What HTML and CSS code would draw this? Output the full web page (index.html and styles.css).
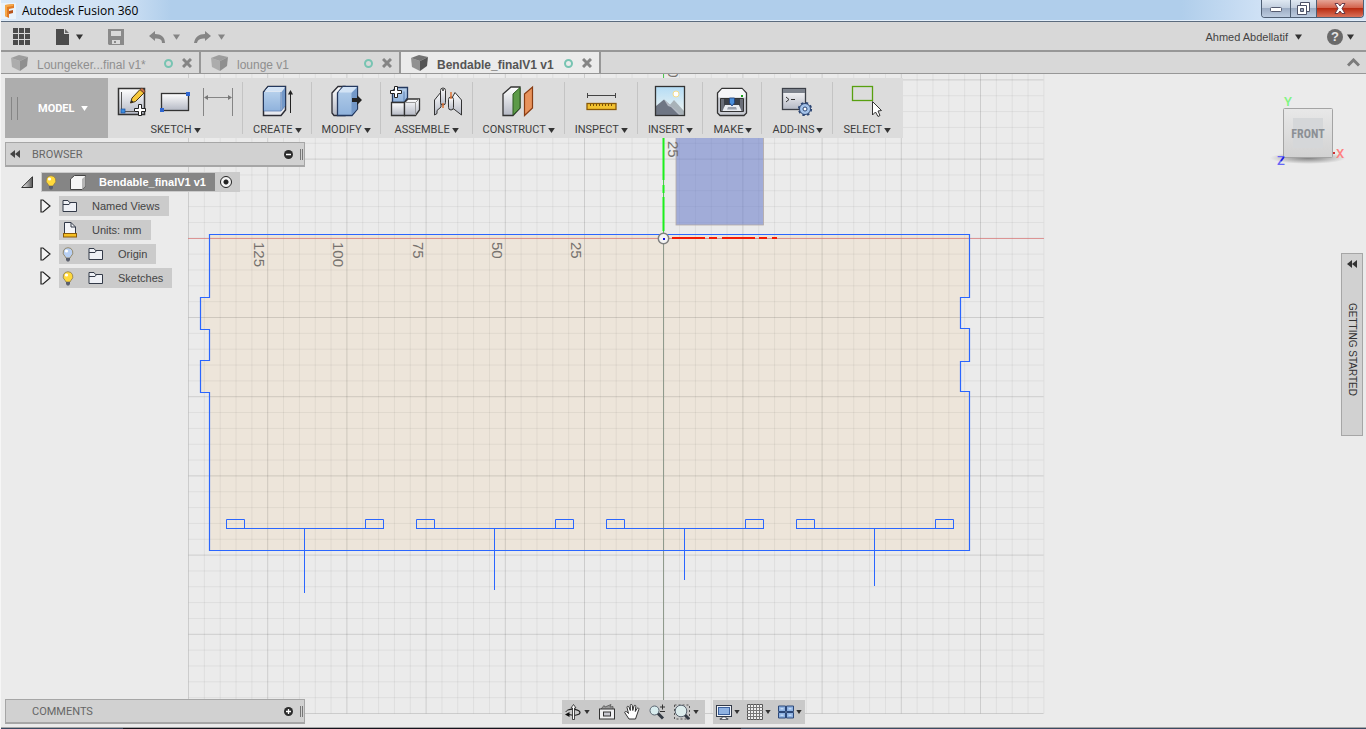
FILE: index.html
```html
<!DOCTYPE html>
<html lang="en">
<head>
    <meta charset="UTF-8">
    <meta name="viewport" content="width=device-width, initial-scale=1.0">
    <title>Autodesk Fusion 360</title>
    <link rel="stylesheet" href="styles.css">
</head>
<body>
    <!-- shared gradients and symbols -->
    <svg class="defs" width="0" height="0" aria-hidden="true">
        <defs>
            <linearGradient id="gBlue" x1="0" y1="0" x2="0" y2="1"><stop offset="0" stop-color="#b5cfeb"/><stop offset="1" stop-color="#8fb2dc"/></linearGradient>
            <linearGradient id="gGray" x1="0" y1="0" x2="0" y2="1"><stop offset="0" stop-color="#ffffff"/><stop offset="1" stop-color="#b4b8c4"/></linearGradient>
            <linearGradient id="gSky" x1="0" y1="0" x2="0" y2="1"><stop offset="0" stop-color="#b4dcf5"/><stop offset="1" stop-color="#f2f6f2"/></linearGradient>
            <linearGradient id="gFace" x1="0" y1="0" x2="0" y2="1"><stop offset="0" stop-color="#e8e8e8"/><stop offset="1" stop-color="#d2d2d2"/></linearGradient>
            <radialGradient id="gShadow"><stop offset="0" stop-color="#808080"/><stop offset="1" stop-color="#808080" stop-opacity="0"/></radialGradient>
            <linearGradient id="gTri" x1="0" y1="0" x2="1" y2="0"><stop offset="0" stop-color="#ffffff"/><stop offset="1" stop-color="#555555"/></linearGradient>
        </defs>
        <symbol id="caret" viewBox="0 0 8 6"><path d="M0 0H8L4 6Z" fill="currentColor"/></symbol>
        <symbol id="doc-cube" viewBox="0 0 17 17">
            <path d="M0 3L8 0L17 2L9 6Z" fill="currentColor" opacity=".8"/>
            <path d="M0 3L9 6V16L1 12Z" fill="currentColor" opacity=".6"/>
            <path d="M9 6L17 2L16 11L9 16Z" fill="currentColor"/>
        </symbol>
        <symbol id="close" viewBox="0 0 10 10"><path d="M1 1L9 9M9 1L1 9" stroke="currentColor" stroke-width="3"/></symbol>
        <symbol id="folder" viewBox="0 0 16 14">
            <path d="M1 12.500V1.500H6L7.500 3.500H14.500V12.500Z" fill="#eef0f5" stroke="#333a48"/>
            <path d="M1 5.500H7L8.500 3.500" fill="none" stroke="#333a48"/>
        </symbol>
        <symbol id="bulb" viewBox="0 0 12 15">
            <path d="M6 .7A4.800 4.800 0 0 0 3 9.300L4 11H8L9 9.300A4.800 4.800 0 0 0 6 .7Z" fill="currentColor" stroke="#8a7a50" stroke-width=".8"/>
            <circle cx="4.500" cy="4" r="1.600" fill="#fff"/>
            <path d="M4 11H8V13L7 14.500H5L4 13Z" fill="#5a5f6c"/>
        </symbol>
        <symbol id="twisty" viewBox="0 0 11 14"><path d="M1 1H3L10 7L3 13H1Z" fill="#f4f4f4" stroke="#222" stroke-width="1.200"/></symbol>
        <symbol id="rewind" viewBox="0 0 10 8"><path d="M5 0V8L0 4ZM10 0V8L5 4Z" fill="currentColor"/></symbol>
    </svg>

    <!-- window title -->
    <header class="titlebar">
        <svg class="logo" width="15" height="16" viewBox="0 0 15 16"><rect width="15" height="16" fill="#e9f3fb"/><path d="M4 2L13 1V5L8 6V15L4 13Z" fill="#e07a24"/><path d="M4 2L13 1L12 3L6 4V14L4 13Z" fill="#f5a848"/><path d="M8 8L12 7V10L8 11Z" fill="#b8541a"/></svg>
        <h1>Autodesk Fusion 360</h1>
        <div class="win_buttons">
            <button class="win_btn win_min" aria-label="Minimize"><svg width="12" height="6" viewBox="0 0 12 6"><rect x=".5" y=".5" width="11" height="4" rx="1" fill="#fff" stroke="#555b70"/></svg></button>
            <button class="win_btn win_max" aria-label="Restore"><svg width="13" height="13" viewBox="0 0 13 13"><path d="M3.500 .5H12.500V9.500H3.500Z" fill="#fff" stroke="#4c5268"/><path d="M.5 3.500H9.500V12.500H.5Z" fill="#fff" stroke="#4c5268"/><path d="M3.500 6.500H6.500V9.500H3.500Z" fill="#9aa6bc" stroke="#4c5268"/></svg></button>
            <button class="win_btn win_close" aria-label="Close"><svg width="12" height="11" viewBox="0 0 12 11"><path d="M1 .5H4L6 3L8 .5H11L8 5.500L11 10.500H8L6 8L4 10.500H1L4 5.500Z" fill="#fff" stroke="#5c3040" stroke-width=".9"/></svg></button>
        </div>
    </header>

    <!-- quick access bar -->
    <div class="appbar">
        <button aria-label="Data panel"><svg width="18" height="17" viewBox="0 0 18 17" fill="#4b4b4b"><path d="M0 0H5V5H0ZM6 0H11V5H6ZM12 0H17V5H12ZM0 6H5V11H0ZM6 6H11V11H6ZM12 6H17V11H12ZM0 12H5V17H0ZM6 12H11V17H6ZM12 12H17V17H12Z"/></svg></button>
        <button aria-label="File"><svg width="13" height="16" viewBox="0 0 13 16"><path d="M0 0H8V5H13V16H0Z" fill="#4b4b4b"/><path d="M9 0L13 4H9Z" fill="#6b6b6b"/></svg><svg class="caret"><use href="#caret"/></svg></button>
        <button aria-label="Save"><svg width="16" height="16" viewBox="0 0 16 16"><path d="M0 0H16V16H1L0 15Z" fill="#8a8a8a"/><path d="M3 2H13V7H3ZM4 11H12V15H4Z" fill="#d9d9d9"/><path d="M6 12H8V14H6Z" fill="#8a8a8a"/></svg></button>
        <div class="history">
            <button class="dim" aria-label="Undo"><svg width="17" height="12" viewBox="0 0 17 12"><path d="M0 5L6 0V3C12 3 16 6 16 12H13C13 8.500 11 7.500 6 7.500V10Z" fill="currentColor"/></svg><svg class="caret"><use href="#caret"/></svg></button>
            <button class="dim" aria-label="Redo"><svg width="17" height="12" viewBox="0 0 17 12"><path d="M17 5L11 0V3C5 3 1 6 0 12H3C4 8.500 6 7.500 11 7.500V10Z" fill="currentColor"/></svg><svg class="caret"><use href="#caret"/></svg></button>
        </div>
        <button class="user">Ahmed Abdellatif<svg class="caret"><use href="#caret"/></svg></button>
        <button class="help" aria-label="Help"><span>?</span><svg class="caret"><use href="#caret"/></svg></button>
    </div>

    <!-- document tabs -->
    <nav class="tabs">
        <div class="tab"><svg class="doc"><use href="#doc-cube"/></svg><a href="#">Loungeker...final v1*</a><i></i><button aria-label="Close tab"><svg width="10" height="10"><use href="#close"/></svg></button></div>
        <div class="tab"><svg class="doc"><use href="#doc-cube"/></svg><a href="#">lounge v1</a><i></i><button aria-label="Close tab"><svg width="10" height="10"><use href="#close"/></svg></button></div>
        <div class="tab current"><svg class="doc"><use href="#doc-cube"/></svg><a href="#">Bendable_finalV1 v1</a><i></i><button aria-label="Close tab"><svg width="10" height="10"><use href="#close"/></svg></button></div>
        <button class="collapse" aria-label="Collapse"><svg width="13" height="9" viewBox="0 0 13 9"><path d="M1 7.500L6.500 2L12 7.500" fill="none" stroke="#7b7b7b" stroke-width="3"/></svg></button>
    </nav>

    <main class="viewport">
        <!-- modelling canvas -->
        <svg class="canvas" aria-label="Sketch canvas">
            <g transform="translate(-1 -74)">
                <path d="M209.500 234.500H969.500V297.500H960.500V328.500H969.500V361.500H960.500V391.500H969.500V550.500H209.500V392.500H200.500V360.500H209.500V329.500H200.500V297.500H209.500Z" fill="#ede5da"/>
                <g id="grid"></g>
                <path d="M188 238.500H1044" stroke="#e26a6a" stroke-opacity=".6"/>
                <path d="M663.500 74V238" stroke="#4fc94f"/>
                <path d="M663.500 238V713" stroke="#8f9a8c"/>
                <rect x="676" y="100" width="87.500" height="125" fill="#6478c8" fill-opacity=".55" stroke="#b4aaa5" stroke-width=".8"/>
                <g fill="none" stroke="#2a66ff">
                    <path d="M209.500 234.500H969.500V297.500H960.500V328.500H969.500V361.500H960.500V391.500H969.500V550.500H209.500V392.500H200.500V360.500H209.500V329.500H200.500V297.500H209.500Z" stroke-width="1.200"/>
                    <path d="M226.500 528.500V519.500H244.500V528.500M365.500 528.500V519.500H383.500V528.500M226 528.500H384M304.500 528V593"/>
                    <path d="M416.500 528.500V519.500H434.500V528.500M555.500 528.500V519.500H573.500V528.500M416 528.500H574M494.500 528V590"/>
                    <path d="M606.500 528.500V519.500H624.500V528.500M745.500 528.500V519.500H763.500V528.500M606 528.500H764M684.500 528V580"/>
                    <path d="M796.500 528.500V519.500H814.500V528.500M935.500 528.500V519.500H953.500V528.500M796 528.500H954M874.500 528V586"/>
                </g>
                <path d="M663.500 138V180M663.500 185V193M663.500 197V231" stroke="#1cf01c" stroke-width="2"/>
                <path d="M672 238H705M709 238H717M722 238H755M759 238H767M772 238H777" stroke="#f51a05" stroke-width="2"/>
                <circle cx="663.500" cy="238.500" r="5.200" fill="#f4f4f4" stroke="#808080" stroke-width="1.500"/>
                <rect x="663" y="238" width="2" height="2" fill="#1010e0"/>
                <g class="ruler">
                    <text transform="translate(254 242) rotate(90)">125</text>
                    <text transform="translate(333 242) rotate(90)">100</text>
                    <text transform="translate(413 242) rotate(90)">75</text>
                    <text transform="translate(492 242) rotate(90)">50</text>
                    <text transform="translate(571 242) rotate(90)">25</text>
                    <text transform="translate(668 141) rotate(90)">25</text>
                    <text transform="translate(668 61) rotate(90)">50</text>
                </g>
            </g>
        </svg>

        <!-- ribbon -->
        <div class="ribbon">
            <button class="workspace"><span>MODEL</span><svg class="caret small"><use href="#caret"/></svg></button>
            <div class="group">
                <div class="icons">
                    <button aria-label="Create sketch"><svg viewBox="0 0 32 32"><rect x="2.500" y="3.500" width="26" height="26" fill="url(#gGray)" stroke="#333" stroke-width="1.500"/><path d="M5.500 7V24M8 26.500H18" stroke="#555" fill="none"/><rect x="5" y="24" width="4" height="4" fill="#3a8de0" stroke="#1c4f9c" stroke-width=".7"/><path d="M14.500 18L16 13L24 4.500L28 8L19.500 16.500Z" fill="#f6c83c" stroke="#4a3510"/><path d="M24 4.500L26 3L29 6L28 8Z" fill="#c8744a" stroke="#6b3a20" stroke-width=".7"/><path d="M14.500 18L15.500 15L17.500 17Z" fill="#222"/><path d="M22.500 19.500H25.500V23.500H29.500V26.500H25.500V30.500H22.500V26.500H18.500V23.500H22.500Z" fill="#fff" stroke="#222"/></svg></button>
                    <button aria-label="Rectangle"><svg viewBox="0 0 32 32"><rect x="2.500" y="8.500" width="27" height="17" fill="url(#gGray)" stroke="#333" stroke-width="1.300"/><path d="M27 7H31V11H27ZM1 23H5V27H1Z" fill="#2f66d0"/></svg></button>
                    <button aria-label="Dimension"><svg viewBox="0 0 32 32"><path d="M1.500 3V31M30.500 3V31M3 12.500H29" stroke="#858585" fill="none"/><path d="M2 12.500L6 10V15ZM30 12.500L26 10V15Z" fill="#777"/></svg></button>
                </div>
                <button class="menu">SKETCH<svg class="caret small"><use href="#caret"/></svg></button>
            </div>
            <div class="group">
                <div class="icons"><button aria-label="Extrude"><svg viewBox="0 0 32 32"><path d="M2.500 7L7 1.500H24.500V25L20 30.500H2.500Z" fill="#e8eaf0" stroke="#2c2c34" stroke-width="1.500"/><path d="M2.500 7H20V26H2.500Z" fill="url(#gBlue)"/><path d="M3 6.500L7 2H24L20 6.500Z" fill="#d3e3f5"/><path d="M20.500 7L24 2.500V21L20.500 26Z" fill="#7398c8"/><path d="M2.500 26V7L7 1.500H24.500V21" fill="none" stroke="#24395f"/><path d="M3 26H20L24 21M20 7V26" fill="none" stroke="#5f82b4" stroke-width=".8"/><path d="M29.500 8V28" stroke="#222"/><path d="M27 9.500L29.500 5L32 9.500Z" fill="#222"/></svg></button></div>
                <button class="menu">CREATE<svg class="caret small"><use href="#caret"/></svg></button>
            </div>
            <div class="group">
                <div class="icons"><button aria-label="Press pull"><svg viewBox="0 0 32 32"><path d="M2 8L8 1.500H15V30.500H4L2 28Z" fill="url(#gGray)" stroke="#2c2c34" stroke-width="1.300"/><path d="M7.500 8L13 1.500H27.500V24L22 30.500H7.500Z" fill="url(#gBlue)" stroke="#24395f" stroke-width="1.300"/><path d="M8 7.500L13 2H27L21.500 7.500Z" fill="#d3e3f5"/><path d="M21.500 8L27 2.500V24L21.500 30Z" fill="#7398c8"/><path d="M22 13H27V10L32 15L27 20V17H22Z" fill="#222"/></svg></button></div>
                <button class="menu">MODIFY<svg class="caret small"><use href="#caret"/></svg></button>
            </div>
            <div class="group">
                <div class="icons">
                    <button aria-label="New component"><svg viewBox="0 0 32 32"><path d="M3.500 6L7 2.500H18.500V13L15 17.500H3.500Z" fill="url(#gBlue)" stroke="#24395f" stroke-width="1.300"/><path d="M15 6.500V17" stroke="#5f82b4"/><path d="M2.500 17.500H15.500V30.500H2.500Z" fill="url(#gGray)" stroke="#333" stroke-width="1.300"/><path d="M15.500 17.500L19 14H30.500V25L26.500 30.500H15.500Z" fill="url(#gGray)" stroke="#333" stroke-width="1.300"/><path d="M16 17.500H26.500V30M26.500 17.500L30 14" stroke="#999" fill="none"/><path d="M5.500 1.500H8.500V5.500H12.500V8.500H8.500V12.500H5.500V8.500H1.500V5.500H5.500Z" fill="#fff" stroke="#222"/></svg></button>
                    <button aria-label="Joint"><svg viewBox="0 0 32 32"><path d="M2.500 15L9 7V22L5 25.500V28.500L2.500 30Z" fill="url(#gGray)" stroke="#333"/><rect x="8.500" y="3" width="5" height="17" rx="2.500" fill="url(#gGray)" stroke="#333"/><circle cx="11" cy="5" r="1" fill="#333"/><path d="M20.500 12L23 7.500L29.500 15V30L20.500 23Z" fill="url(#gGray)" stroke="#333"/><rect x="16.500" y="12" width="5" height="13" rx="2.500" fill="url(#gGray)" stroke="#333"/><path d="M19 7V14M11 18V23" stroke="#e0661c" stroke-width="1.300"/></svg></button>
                </div>
                <button class="menu">ASSEMBLE<svg class="caret small"><use href="#caret"/></svg></button>
            </div>
            <div class="group">
                <div class="icons"><button aria-label="Offset plane"><svg viewBox="0 0 32 32"><path d="M1 9L9 2H18V23L11 30.500H1Z" fill="url(#gGray)" stroke="#333" stroke-width="1.300"/><path d="M11 9L18 2.500V23L11 30Z" fill="#5c9a48" stroke="#2c5a20"/><path d="M22.500 9L30.500 2V23L22.500 30.500Z" fill="#e8935c" stroke="#8a3c12" stroke-width="1.200"/></svg></button></div>
                <button class="menu">CONSTRUCT<svg class="caret small"><use href="#caret"/></svg></button>
            </div>
            <div class="group">
                <div class="icons"><button aria-label="Measure"><svg viewBox="0 0 32 32"><path d="M2.500 8V13M30.500 8V13M2.500 10.500H30.500" stroke="#444" fill="none"/><rect x="2" y="18.500" width="29" height="6" fill="#f2c230" stroke="#8a5a08" stroke-width="1.300"/><path d="M5.500 19V21M8.500 19V21M11.500 19V21M14.500 19V21M17.500 19V21M20.500 19V21M23.500 19V21M26.500 19V21" stroke="#7a5208"/></svg></button></div>
                <button class="menu">INSPECT<svg class="caret small"><use href="#caret"/></svg></button>
            </div>
            <div class="group">
                <div class="icons"><button aria-label="Insert image"><svg viewBox="0 0 32 32"><rect x="1.500" y="1.500" width="29" height="29" fill="url(#gSky)"/><path d="M14 22L20 15L30 26V30H14Z" fill="#a8b2b8"/><path d="M2 21L10 14.500L27 30H2Z" fill="#6f7684"/><path d="M10 14.500L14 21L17 22L25 30H28Z" fill="#b4bac4"/><circle cx="22" cy="9" r="3" fill="#fff" stroke="#f4dd8c"/><rect x="1.500" y="1.500" width="29" height="29" fill="none" stroke="#333" stroke-width="1.300"/></svg></button></div>
                <button class="menu">INSERT<svg class="caret small"><use href="#caret"/></svg></button>
            </div>
            <div class="group">
                <div class="icons"><button aria-label="3D print"><svg viewBox="0 0 32 32"><path d="M1.500 8L6 3.500H26L30.500 8V28L28 30.500H4L1.500 28Z" fill="#c9ccd3" stroke="#333" stroke-width="1.300"/><path d="M2.500 8L6 4H26L29.500 8V12.500H2.500Z" fill="#f6f6f8"/><path d="M4.500 13.500H27.500V26.500H4.500Z" fill="#6a6e78" stroke="#333"/><path d="M8 14H24V22H8Z" fill="#3c4048"/><path d="M9 20H23L25.500 26H6.500Z" fill="#e8ebf0"/><path d="M12 22H20L21 24.500H11Z" fill="#9aa0ac"/><path d="M13.500 13H18.500V18L16 21L13.500 18Z" fill="#4a8fdc" stroke="#1e3f7c" stroke-width=".8"/><rect x="25" y="10" width="2" height="2" fill="#18a018"/></svg></button></div>
                <button class="menu">MAKE<svg class="caret small"><use href="#caret"/></svg></button>
            </div>
            <div class="group">
                <div class="icons"><button aria-label="Scripts"><svg viewBox="0 0 32 32"><rect x="1.500" y="3.500" width="23" height="21" fill="url(#gGray)" stroke="#3c4048" stroke-width="1.300"/><rect x="2" y="4" width="22" height="4" fill="#7c828c"/><path d="M5 12L8 14.500L5 17M10 14.500H14" fill="none" stroke="#333"/><circle cx="24" cy="24" r="5.500" fill="#a4c3ea" stroke="#2a4472"/><circle cx="24" cy="24" r="6.300" fill="none" stroke="#2a4472" stroke-width="1.600" stroke-dasharray="2.500 2.448"/><circle cx="24" cy="24" r="2" fill="#fff" stroke="#2a4472"/></svg></button></div>
                <button class="menu">ADD-INS<svg class="caret small"><use href="#caret"/></svg></button>
            </div>
            <div class="group">
                <div class="icons"><button aria-label="Select"><svg viewBox="0 0 32 32"><rect x="1.500" y="1.500" width="20" height="14" fill="none" stroke="#58a010" stroke-width="1.300"/><path d="M21.500 16.500V30L24.500 27L27 31.500L29 30.500L27 26L30.500 25.500Z" fill="#fff" stroke="#333"/></svg></button></div>
                <button class="menu">SELECT<svg class="caret small"><use href="#caret"/></svg></button>
            </div>
        </div>

        <!-- browser panel -->
        <section class="browser">
            <div class="panel_head">
                <button aria-label="Hide browser"><svg width="10" height="8"><use href="#rewind"/></svg></button>
                <h2>BROWSER</h2>
                <button aria-label="Collapse browser"><svg width="9" height="9" viewBox="0 0 9 9"><circle cx="4.500" cy="4.500" r="4.500" fill="#2c2c2c"/><path d="M2 4.500H7" stroke="#fff" stroke-width="1.500"/></svg></button>
                <span class="grip"></span>
            </div>
            <ul class="tree">
                <li class="root">
                    <svg width="12" height="12" viewBox="0 0 12 12"><path d="M11.500 .7V11.500H.7Z" fill="url(#gTri)" stroke="#333"/></svg>
                    <label class="chip">
                        <span class="chip_dark">
                            <svg class="bulb"><use href="#bulb"/></svg>
                            <svg width="16" height="15" viewBox="0 0 16 15"><path d="M.5 4L4.500 .5H15.500V11L12 14.500H.5Z" fill="#f6f6f6" stroke="#444"/><path d="M12 4L15.500 1V11L12 14Z" fill="#b5b5b5"/></svg>
                            Bendable_finalV1 v1
                        </span>
                        <input type="radio" name="active" checked>
                    </label>
                </li>
                <li><svg class="twisty"><use href="#twisty"/></svg><a href="#" class="chip"><svg class="folder"><use href="#folder"/></svg>Named Views</a></li>
                <li><span class="twisty"></span><a href="#" class="chip"><svg width="16" height="16" viewBox="0 0 16 16"><path d="M2.500 12V.5H9L13.500 5V12Z" fill="#f4f5f8" stroke="#333a48"/><path d="M9 .5V5H13.500" fill="none" stroke="#333a48"/><rect x="1.500" y="11.500" width="13" height="3.500" fill="#f4be22" stroke="#8a5a08"/></svg>Units: mm</a></li>
                <li><svg class="twisty"><use href="#twisty"/></svg><a href="#" class="chip"><svg class="bulb off"><use href="#bulb"/></svg><svg class="folder"><use href="#folder"/></svg>Origin</a></li>
                <li><svg class="twisty"><use href="#twisty"/></svg><a href="#" class="chip"><svg class="bulb"><use href="#bulb"/></svg><svg class="folder"><use href="#folder"/></svg>Sketches</a></li>
            </ul>
        </section>

        <!-- view cube -->
        <svg class="viewcube" width="76" height="76" viewBox="0 0 76 76">
            <ellipse cx="38" cy="64" rx="38" ry="6" fill="url(#gShadow)"/>
            <rect x="13.500" y="14.500" width="49" height="49" rx="1" fill="url(#gFace)" stroke="#a4a4a4"/>
            <rect x="23" y="24" width="30" height="30" fill="#d5d7d9"/>
            <text class="face" x="38" y="44">FRONT</text>
            <text class="axis" x="18" y="12" fill="#80f580">Y</text>
            <text class="axis" x="70" y="64" fill="#ff8080">X</text>
            <rect x="63" y="58" width="2" height="2" fill="#d03030"/>
            <text class="axis" x="11" y="71" fill="#6666f5">Z</text>
            <path d="M11 67L14 63" stroke="#2020e0" stroke-width="1.500"/>
        </svg>

        <button class="getting_started"><svg width="10" height="8"><use href="#rewind"/></svg><span>GETTING STARTED</span></button>

        <!-- comments and navigation -->
        <div class="bottom">
            <div class="panel_head comments">
                <h2>COMMENTS</h2>
                <button aria-label="Add comment"><svg width="9" height="9" viewBox="0 0 9 9"><circle cx="4.500" cy="4.500" r="4.500" fill="#2c2c2c"/><path d="M2 4.500H7M4.500 2V7" stroke="#fff" stroke-width="1.300"/></svg></button>
                <span class="grip"></span>
            </div>
            <div class="navbar">
                <div class="nav_group">
                    <button aria-label="Orbit"><svg viewBox="0 0 16 16"><path d="M3 6C8 4 15 6 15 8.500S9 12 4 10.500" fill="none" stroke="#222" stroke-width="1.200"/><path d="M0 10.500L4.500 8V13Z" fill="#111"/><path d="M1 8C1 7 2 6.500 3 6" fill="none" stroke="#222"/><path d="M7.500 15.500V4H6L8.500 .5L11 4H9.500V15.500Z" fill="#fff" stroke="#222" stroke-width=".8"/></svg><svg class="caret tiny"><use href="#caret"/></svg></button>
                    <button aria-label="Look at"><svg viewBox="0 0 16 16"><path d="M2 5L5 1.500L6 3L12 .5L11 3L14 2.500L14 5" fill="#9a9a9a" stroke="#555" stroke-width=".8"/><rect x=".5" y="5" width="15" height="10" fill="#f0f0f2" stroke="#333"/><rect x="4.500" y="8" width="7" height="4" fill="#c8c8d0" stroke="#333"/></svg></button>
                    <button aria-label="Pan"><svg viewBox="0 0 16 16"><path d="M5 15L1 9C0 7.500 2 7 3 8L4.500 9.500L3 3.500C2.700 2 4.500 2 5 3L6.300 6.500L6.300 1.500C6.300 0 8 0 8.300 1.500L8.800 6.500L10 2C10.500 .8 12 1 11.800 2.500L11.300 7.500L13 4.500C13.800 3.500 15.200 4 14.800 5.300L12.500 12L11.500 15Z" fill="#fff" stroke="#333"/></svg></button>
                    <button aria-label="Zoom"><svg viewBox="0 0 16 16"><path d="M8.500 9L14 14.500" stroke="#333a44" stroke-width="3"/><circle cx="5.500" cy="6.500" r="4.500" fill="#d8ecee" stroke="#5a6470"/><path d="M11 3H16M13.500 .5V5.500M11 7.500H16" stroke="#333"/></svg></button>
                    <button aria-label="Zoom window"><svg viewBox="0 0 16 16"><rect x=".5" y="1" width="15" height="14" fill="none" stroke="#555" stroke-dasharray="2 2"/><path d="M10.500 10.500L15 15" stroke="#333a44" stroke-width="3"/><circle cx="7" cy="7" r="5.800" fill="#dcecec" stroke="#5a6470"/></svg><svg class="caret tiny"><use href="#caret"/></svg></button>
                </div>
                <div class="nav_group display">
                    <button aria-label="Display settings"><svg viewBox="0 0 16 16"><rect x=".5" y="1.500" width="15" height="11" fill="#f0f4fa" stroke="#333a48"/><rect x="2.500" y="3.500" width="11" height="7" fill="#8fb2e2" stroke="#3a5f9c"/><path d="M6 13H10V14.500H12V15.500H4V14.500H6Z" fill="#fff" stroke="#333a48" stroke-width=".7"/></svg><svg class="caret tiny"><use href="#caret"/></svg></button>
                    <button aria-label="Grid and snaps"><svg viewBox="0 0 16 16"><path d="M.5 .5H15.500V15.500H.5Z" fill="#f0f0f0" stroke="#555"/><path d="M3.500 0V16M6.500 0V16M9.500 0V16M12.500 0V16M0 3.500H16M0 6.500H16M0 9.500H16M0 12.500H16" stroke="#777"/></svg><svg class="caret tiny"><use href="#caret"/></svg></button>
                    <button aria-label="Viewports"><svg viewBox="0 0 16 16" fill="#8fb2e2" stroke="#2c4878"><path d="M.5 2H7.500V7.500H.5ZM8.500 2H15.500V7.500H8.500ZM.5 8.500H7.500V14H.5ZM8.500 8.500H15.500V14H8.500Z"/><path d="M2.500 4H5.500V5.500H2.500ZM10.500 4H13.500V5.500H10.500ZM2.500 10.500H5.500V12H2.500ZM10.500 10.500H13.500V12H10.500Z" fill="#c4daf4" stroke="none"/></svg><svg class="caret tiny"><use href="#caret"/></svg></button>
                </div>
            </div>
        </div>
    </main>
    <div class="taskbar_edge"></div>

    <script>
        let grid = document.querySelector('#grid');
        let step = 15.84;
        let left = 188.5, right = 1043.5, top_y = 74, bottom = 713.5;
        function line(x1, y1, x2, y2, major) {
            let l = document.createElementNS('http://www.w3.org/2000/svg', 'line');
            l.setAttribute('x1', x1);
            l.setAttribute('y1', y1);
            l.setAttribute('x2', x2);
            l.setAttribute('y2', y2);
            l.setAttribute('class', major ? 'major' : 'minor');
            grid.appendChild(l);
        }
        // every fifth line is a major one
        for (let i = 0; i <= 54; i++) {
            let x = left + i * step;
            line(x, top_y, x, bottom, i % 5 == 0);
        }
        for (let i = 0; i <= 40; i++) {
            let y = bottom - i * step;
            line(left, y, right, y, i % 5 == 0);
        }
    </script>
</body>
</html>
```
FILE: styles.css
```css
*{
    box-sizing: border-box;
}
body{
    margin: 0;
    height: 100vh;
    display: flex;
    flex-direction: column;
    overflow: hidden;
    border-left: 1px solid #f6f6f6;
    background-color: #ebebeb;
    font-family: "Liberation Sans", Arial, sans-serif;
    font-size: 11px;
    color: #444;
}
button{
    display: flex;
    align-items: center;
    padding: 0;
    border: 0;
    background: none;
    font: inherit;
    color: inherit;
    cursor: pointer;
}
a{
    color: inherit;
    text-decoration: none;
}
svg{
    display: block;
    flex: none;
}
h1, h2, ul{
    margin: 0;
    padding: 0;
    font-weight: normal;
    list-style: none;
}
.defs{
    position: absolute;
}
.caret{
    width: 7px;
    height: 6px;
    color: #333;
}
.caret.small{
    width: 7px;
    height: 5px;
}
.caret.tiny{
    width: 6px;
    height: 4px;
}

/* title bar */
.titlebar{
    flex: none;
    display: flex;
    align-items: center;
    height: 22px;
    border-bottom: 1px solid #5b6b7e;
    background: linear-gradient(90deg, #d9e8f7 0, #cfe1f4 120px, #b0ceeb 170px, #b0ceeb 1180px, #cfe1f5 1260px, #d4e4f6 100%);
    box-shadow: inset 0 -1px #e2eefa;
}
.titlebar h1{
    flex: 1;
    margin-left: 6px;
    font: 12px "Open Sans", "Noto Sans", sans-serif;
    color: #000;
}
.win_buttons{
    display: flex;
    align-self: flex-start;
    margin-right: 2px;
    height: 18px;
    border: 1px solid #4f5f74;
    border-top: 0;
    border-radius: 0 0 4px 4px;
    overflow: hidden;
}
.win_btn{
    justify-content: center;
    background: linear-gradient(#dfe8f2 0, #c3cfdf 45%, #9dadc4 50%, #bccbe0 100%);
    border-right: 1px solid #4f5f74;
}
.win_min{
    width: 29px;
    padding-top: 3px;
}
.win_max{
    width: 26px;
}
.win_close{
    width: 46px;
    border-right: 0;
    background: linear-gradient(#e5a596 0, #d3644e 45%, #b92c12 50%, #d9705a 100%);
}

/* quick access bar */
.appbar{
    flex: none;
    display: flex;
    align-items: center;
    gap: 25px;
    height: 30px;
    padding: 1px 12px 0;
    border-bottom: 2px solid #979797;
    background-color: #d8d8d8;
}
.appbar button{
    gap: 7px;
}
.history{
    display: flex;
    gap: 14px;
}
.dim, .dim .caret{
    color: #858585;
}
.user{
    margin-left: auto;
}
.help span{
    width: 16px;
    height: 16px;
    border-radius: 50%;
    background-color: #6a6a6a;
    color: #e6e6e6;
    font-weight: bold;
    font-size: 13px;
    line-height: 16px;
    text-align: center;
}
.appbar .help{
    gap: 4px;
}

/* document tabs */
.tabs{
    flex: none;
    display: flex;
    height: 22px;
    border-bottom: 1px solid #979797;
    background-color: #d8d8d8;
}
.tab{
    display: flex;
    align-items: center;
    width: 200px;
    padding: 1px 7px 0 10px;
    border-right: 2px solid #979797;
    font-size: 12px;
    color: #8f8f8f;
}
.tab a{
    flex: 1;
    margin-left: 9px;
    padding-top: 3px;
}
.tab i{
    width: 9px;
    height: 9px;
    margin-right: 9px;
    border: 2px solid #77c4b2;
    border-radius: 50%;
}
.tab button{
    color: #858585;
}
.doc{
    width: 17px;
    height: 17px;
}
.tab.current{
    background-color: #ebebeb;
    font-weight: bold;
    color: #555;
}
.collapse{
    margin-left: auto;
    padding-right: 6px;
}

/* canvas */
.viewport{
    position: relative;
    flex: 1;
    min-height: 0;
    display: flex;
    flex-direction: column;
    align-items: flex-start;
    padding: 4px 4px 3px;
}
.canvas{
    position: absolute;
    left: 0;
    top: 0;
    width: 100%;
    height: 100%;
}
.minor{
    stroke: #000;
    stroke-opacity: 0.055;
}
.major{
    stroke: #000;
    stroke-opacity: 0.13;
}
.ruler{
    font-size: 15px;
    fill: #76726e;
}

/* ribbon */
.ribbon{
    position: relative;
    display: flex;
    height: 60px;
    padding-right: 3px;
    background-color: #dcdcdc;
    font-family: Roboto, sans-serif;
}
.workspace{
    width: 103px;
    gap: 6px;
    padding-left: 6px;
    background-color: #adadad;
    color: #fff;
    font-weight: bold;
}
.workspace::before{
    content: "";
    width: 5px;
    height: 23px;
    margin-right: 14px;
    border: 1px solid #858585;
    border-width: 0 1px;
}
.workspace .caret{
    color: #fff;
}
.group{
    display: flex;
    flex-direction: column;
    align-items: center;
    margin: 4px 0;
    padding: 3px 8px 0;
    border-right: 1px solid #c4c4c4;
}
.group:last-child{
    border-right: 0;
}
.icons{
    display: flex;
    gap: 11px;
}
.icons svg{
    width: 32px;
    height: 32px;
}
.menu{
    gap: 2px;
    margin-top: 5px;
    padding: 1px 1px 0 2px;
    line-height: 14px;
    color: #3c3c3c;
}

/* panels */
.browser{
    position: relative;
    margin-top: 4px;
}
.panel_head{
    display: flex;
    align-items: center;
    width: 300px;
    height: 25px;
    padding: 0 1px 0 4px;
    border: 1px solid #a6a6a6;
    border-width: 1px 1px 2px;
    background-color: #d1d1d1;
    font-family: Roboto, sans-serif;
}
.panel_head h2{
    flex: 1;
    margin-left: 12px;
    font-size: 11px;
    color: #666;
}
.comments h2{
    margin-left: 22px;
}
.grip{
    width: 3px;
    height: 11px;
    margin-left: 7px;
    border: 1px solid #777;
    border-width: 0 1px;
}
.tree{
    display: flex;
    flex-direction: column;
    gap: 4px;
    margin-top: 5px;
}
.tree li{
    display: flex;
    align-items: center;
    gap: 8px;
    height: 20px;
    padding-left: 35px;
}
.tree .root{
    padding-left: 16px;
    font-weight: bold;
    color: #fff;
}
.chip{
    display: flex;
    align-items: center;
    gap: 14px;
    height: 20px;
    padding: 0 9px 0 3px;
    background-color: #cbcbcb;
}
.root .chip{
    gap: 5px;
    padding: 0 8px 0 1px;
}
.chip_dark{
    display: flex;
    align-items: center;
    gap: 13px;
    height: 18px;
    padding: 0 9px 0 3px;
    background-color: #858585;
}
.chip input{
    appearance: none;
    width: 12px;
    height: 12px;
    margin: 0;
    border: 1px solid #222;
    border-radius: 50%;
    background: radial-gradient(#222 0 2px, #f4f4f4 3px);
}
.twisty{
    width: 11px;
    height: 14px;
}
.folder{
    width: 16px;
    height: 14px;
}
.bulb{
    width: 12px;
    height: 15px;
    color: #ffd93c;
}
.bulb.off{
    color: #b8d0f4;
}

/* view cube */
.viewcube{
    position: absolute;
    top: 20px;
    right: 20px;
}
.face{
    font: bold 12px "Roboto Condensed", "Liberation Sans Narrow", Roboto, sans-serif;
    fill: #8c9095;
    text-anchor: middle;
}
.axis{
    font: 500 13px Roboto, sans-serif;
    text-anchor: middle;
}

.getting_started{
    position: absolute;
    top: 179px;
    right: 3px;
    flex-direction: column;
    gap: 35px;
    width: 22px;
    height: 183px;
    padding-top: 6px;
    border: 1px solid #a6a6a6;
    background-color: #d1d1d1;
    font: 10px "Liberation Sans", Arial, sans-serif;
    color: #333;
}
.getting_started span{
    writing-mode: vertical-rl;
}

/* bottom row */
.bottom{
    position: relative;
    display: grid;
    grid-template-columns: 1fr auto 1fr;
    align-items: center;
    width: 100%;
    margin-top: auto;
}
.navbar{
    display: flex;
    gap: 8px;
}
.nav_group{
    display: flex;
    gap: 9px;
    height: 24px;
    padding: 0 6px 0 3px;
    background-color: #c9c9c9;
}
.nav_group button{
    gap: 3px;
}
.nav_group svg:first-child{
    width: 16px;
    height: 16px;
}
.nav_group.display{
    gap: 7px;
    padding: 0 3px;
}
.nav_group.display button{
    gap: 2px;
}
.taskbar_edge{
    flex: none;
    height: 2px;
    border-top: 1px solid #a6a6a6;
    background: linear-gradient(90deg, #3c4a62 0 122px, #14121c 122px 740px, #3c4a62 740px);
}
```
